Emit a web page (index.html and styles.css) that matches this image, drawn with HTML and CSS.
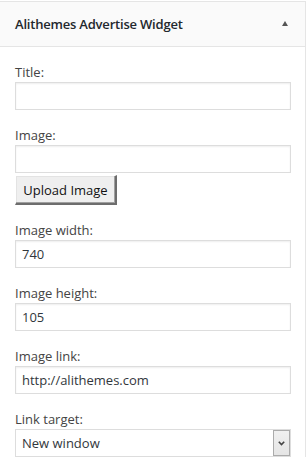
FILE: index.html
```html
<!DOCTYPE html>
<html>
<head>
<meta charset="utf-8">
<link rel="stylesheet" href="styles.css">
</head>
<body>
<div class="widget">
  <div class="widget-top">
    <h3 class="widget-title">Alithemes Advertise Widget</h3>
    <span class="toggle"></span>
  </div>
  <div class="widget-body">
    <div class="field">
      <label class="lbl">Title:</label>
      <input class="txt" type="text" value="">
    </div>
    <div class="field">
      <label class="lbl">Image:</label>
      <input class="txt" type="text" value="">
      <button class="btn" type="button">Upload Image</button>
    </div>
    <div class="field">
      <label class="lbl">Image width:</label>
      <input class="txt" type="text" value="740">
    </div>
    <div class="field">
      <label class="lbl">Image height:</label>
      <input class="txt" type="text" value="105">
    </div>
    <div class="field">
      <label class="lbl">Image link:</label>
      <input class="txt" type="text" value="http://alithemes.com">
    </div>
    <div class="field">
      <label class="lbl">Link target:</label>
      <div class="select">
        <span class="select-value">New window</span>
        <span class="select-arrow">
          <svg width="7" height="5" viewBox="0 0 7 5"><path d="M0.8 0.8 L3.5 3.6 L6.2 0.8" fill="none" stroke="#444" stroke-width="1.6"/></svg>
        </span>
      </div>
    </div>
  </div>
</div>
</body>
</html>
```
FILE: styles.css
```css
html, body {
  margin: 0;
  padding: 0;
  background: #fff;
}
body {
  font-family: "Open Sans", "Noto Sans", sans-serif;
  font-size: 13px;
  color: #444;
}
.widget {
  width: 305px;
  margin-top: 1px;
  border: 1px solid #e5e5e5;
  border-left: none;
  border-bottom: none;
  background: #fff;
}
.widget-top {
  height: 44px;
  background: #fafafa;
  border-bottom: 1px solid #e5e5e5;
  display: flex;
  align-items: center;
  justify-content: space-between;
  padding: 0 17px 0 15px;
}
.widget-title {
  margin: 0;
  font-size: 13px;
  font-weight: 600;
  letter-spacing: -0.2px;
  color: #23282d;
}
.toggle {
  width: 0;
  height: 0;
  border-left: 3.5px solid transparent;
  border-right: 3.5px solid transparent;
  border-bottom: 5px solid #555;
  margin-top: -2px;
}
.widget-body {
  padding: 16px 14px 0 15px;
  display: flex;
  flex-direction: column;
  gap: 16px;
}
.field {
  display: flex;
  flex-direction: column;
  align-items: flex-start;
}
.lbl {
  display: block;
  line-height: 18px;
  height: 18px;
  margin-bottom: 1px;
  color: #444;
}
.txt {
  box-sizing: border-box;
  width: 100%;
  height: 28px;
  margin: 0;
  border: 1px solid #ddd;
  box-shadow: inset 0 1px 2px rgba(0,0,0,0.07);
  padding: 0 6px;
  font-family: "Open Sans", "Noto Sans", sans-serif;
  font-size: 13px;
  color: #32373c;
  background: #fff;
  outline: none;
}
.btn {
  box-sizing: border-box;
  margin-top: 2px;
  height: 30px;
  width: 102px;
  padding: 0;
  font-family: "Open Sans", "Noto Sans", sans-serif;
  font-size: 13px;
  color: #111;
  background: #efefef;
  border-top: 1px solid #fff;
  border-left: 1px solid #fff;
  border-right: 2px solid #6d6d6d;
  border-bottom: 2px solid #6d6d6d;
  box-shadow: inset -1px -1px 0 #a0a0a0, inset 1px 1px 0 #e3e3e3;
}
.select {
  box-sizing: border-box;
  width: 100%;
  height: 28px;
  border: 1px solid #ddd;
  display: flex;
  align-items: stretch;
  background: #fff;
}
.select-value {
  flex: 1;
  display: flex;
  align-items: center;
  padding-left: 6px;
  color: #32373c;
}
.select-arrow {
  box-sizing: border-box;
  width: 17px;
  border: 1px solid #ababab;
  background: linear-gradient(#f0f0f0, #e5e5e5);
  display: flex;
  align-items: center;
  justify-content: center;
}
```
